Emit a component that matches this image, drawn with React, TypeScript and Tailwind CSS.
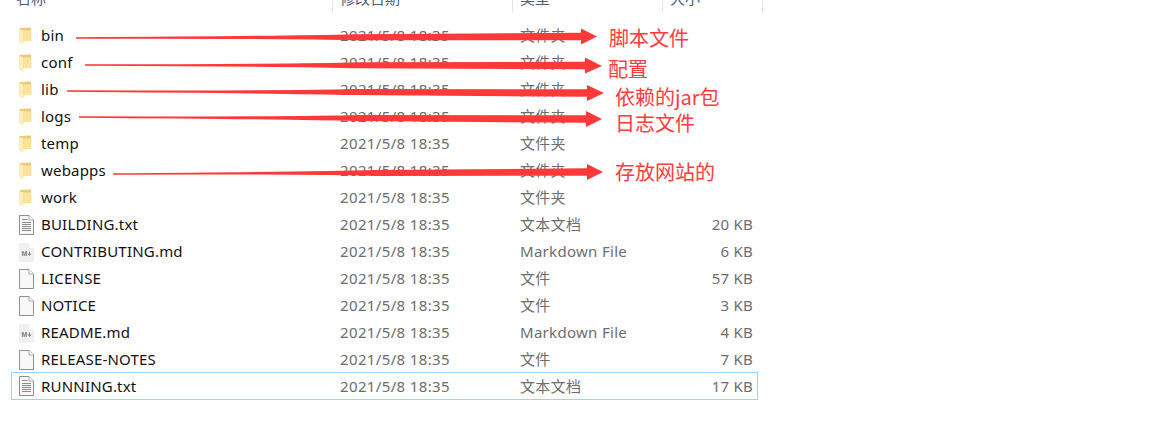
const font = { fontFamily: '"Noto Sans", "Noto Sans CJK SC", sans-serif' };

function Folder() {
  return (
    <svg width="13" height="18" viewBox="0 0 13 18" className="shrink-0">
      <path d="M0.5 1 L12 0.5 V13.5 L0.5 14.5 Z" fill="#ecca72" />
      <path d="M0.5 2 L4.5 3.5 V17.5 L0.5 16 Z" fill="#fbeeb8" />
      <path d="M4.5 3.5 H12.5 V14 H4.5 Z" fill="#fbe39c" />
    </svg>
  );
}
function Doc({ lines }: { lines?: boolean }) {
  return (
    <svg width="15" height="20" viewBox="0 0 15 20" className="shrink-0">
      <path d="M0.5 0.5 H10 L14.5 5 V19.5 H0.5 Z" fill="#f8f8f8" stroke="#8f8f8f" />
      <path d="M10 0.5 V5 H14.5" fill="#fff" stroke="#a8a8a8" />
      {lines && (
        <g stroke="#8c8c8c">
          <path d="M3 4.5 H8.5 M3 7.5 H12 M3 9.5 H12 M3 11.5 H12 M3 13.5 H12 M3 15.5 H12" />
        </g>
      )}
    </svg>
  );
}
function Md() {
  return (
    <svg width="15" height="20" viewBox="0 0 15 20" className="shrink-0">
      <path d="M0 1 H10 L15 6 V19 Q15 20 14 20 H1 Q0 20 0 19 Z" fill="#f0f0f0" />
      <path d="M10 1 V6 H15 Z" fill="#fbfbfb" />
      <text x="2.5" y="14" fontSize="7" fontWeight="700" fill="#808080" fontFamily="Liberation Sans">M</text>
      <path d="M10.5 9.5 V13 M9 11.5 L10.5 13.5 L12 11.5" stroke="#808080" strokeWidth="1" fill="none" />
    </svg>
  );
}

const rows: [string, string, string, string, string][] = [
  ["folder", "bin", "2021/5/8 18:35", "文件夹", ""],
  ["folder", "conf", "2021/5/8 18:35", "文件夹", ""],
  ["folder", "lib", "2021/5/8 18:35", "文件夹", ""],
  ["folder", "logs", "2021/5/8 18:35", "文件夹", ""],
  ["folder", "temp", "2021/5/8 18:35", "文件夹", ""],
  ["folder", "webapps", "2021/5/8 18:35", "文件夹", ""],
  ["folder", "work", "2021/5/8 18:35", "文件夹", ""],
  ["txt", "BUILDING.txt", "2021/5/8 18:35", "文本文档", "20 KB"],
  ["md", "CONTRIBUTING.md", "2021/5/8 18:35", "Markdown File", "6 KB"],
  ["file", "LICENSE", "2021/5/8 18:35", "文件", "57 KB"],
  ["file", "NOTICE", "2021/5/8 18:35", "文件", "3 KB"],
  ["md", "README.md", "2021/5/8 18:35", "Markdown File", "4 KB"],
  ["file", "RELEASE-NOTES", "2021/5/8 18:35", "文件", "7 KB"],
  ["txt", "RUNNING.txt", "2021/5/8 18:35", "文本文档", "17 KB"],
];

const arrows = [
  { x0: 76, y0: 38, xb: 581, yb: 36.5, tip: 597, ty: 36.5 },
  { x0: 85, y0: 65, xb: 585, yb: 65.5, tip: 602, ty: 66 },
  { x0: 67, y0: 91, xb: 587, yb: 93, tip: 604, ty: 93 },
  { x0: 79, y0: 117, xb: 586, yb: 119, tip: 602, ty: 119 },
  { x0: 113, y0: 174, xb: 587, yb: 172, tip: 603, ty: 172 },
];

function arrowPath(a: (typeof arrows)[number]) {
  const mx = a.x0 + (a.xb - a.x0) * 0.55;
  const my = a.y0 + (a.yb - a.y0) * 0.55;
  return [
    `M${a.x0} ${a.y0 - 0.7}`,
    `Q${mx - 60} ${my - 1.2} ${mx} ${my - 3}`,
    `L${a.xb} ${a.yb - 3.7}`,
    `L${a.xb} ${a.yb - 8}`,
    `L${a.tip} ${a.ty}`,
    `L${a.xb} ${a.yb + 8}`,
    `L${a.xb} ${a.yb + 3.7}`,
    `L${mx} ${my + 3}`,
    `Q${mx - 60} ${my + 1.2} ${a.x0} ${a.y0 + 0.7}`,
    "Z",
  ].join(" ");
}

const labels = [
  { t: "脚本文件", cls: "left-[609px] top-[23px]" },
  { t: "配置", cls: "left-[608px] top-[54px]" },
  { t: "依赖的jar包", cls: "left-[615px] top-[82px]" },
  { t: "日志文件", cls: "left-[615px] top-[108px]" },
  { t: "存放网站的", cls: "left-[615px] top-[157px]" },
];

export default function App() {
  return (
    <div className="relative w-[1154px] h-[423px] overflow-hidden bg-white" style={font}>
      <div className="flex h-[13px] overflow-hidden text-[15px] text-[#4c607a]">
        <div className="w-[333px] border-r border-[#e5e5e5] pl-[16px]"><span className="block -mt-[13px] leading-[22px]">名称</span></div>
        <div className="w-[180px] border-r border-[#e5e5e5] pl-[7px]"><span className="block -mt-[13px] leading-[22px]">修改日期</span></div>
        <div className="w-[150px] border-r border-[#e5e5e5] pl-[7px]"><span className="block -mt-[13px] leading-[22px]">类型</span></div>
        <div className="w-[100px] border-r border-[#e5e5e5] pl-[7px]"><span className="block -mt-[13px] leading-[22px]">大小</span></div>
      </div>
      <div className="ml-[11px] mt-[9px] w-[747px] flex flex-col">
        {rows.map(([kind, name, date, type, size], i) => (
          <div
            key={name}
            className={
              "flex items-center text-[15px] " +
              (i === rows.length - 1 ? "border border-[#99d1ff] h-[28px] -mt-[1px]" : "border border-transparent h-[27px]")
            }
          >
            <div className="w-[328px] flex items-center pl-[7px] text-[#111111] tracking-[0.2px]">
              <div className="w-[22px] flex items-center">
                {kind === "folder" && <Folder />}
                {kind === "txt" && <Doc lines />}
                {kind === "md" && <Md />}
                {kind === "file" && <Doc />}
              </div>
              <span>{name}</span>
            </div>
            <div className="w-[180px] text-[#6d6d6d] tracking-[0.36px]">{date}</div>
            <div className="w-[150px] text-[#6d6d6d] tracking-[0.3px]">{type}</div>
            <div className="flex-1 text-right pr-[4px] text-[#6d6d6d] tracking-[0.25px]">{size}</div>
          </div>
        ))}
      </div>
      <svg className="absolute inset-0" width="1154" height="423" viewBox="0 0 1154 423">
        {arrows.map((a) => (
          <path key={a.x0} fill="#ff3838" d={arrowPath(a)} />
        ))}
      </svg>
      {labels.map((l) => (
        <div
          key={l.t}
          className={"absolute text-[20px] leading-[30px] text-[#ff3b3b] whitespace-nowrap " + l.cls}
          style={{ fontFamily: '"Noto Sans CJK SC", "Noto Sans", sans-serif' }}
        >
          {l.t}
        </div>
      ))}
    </div>
  );
}
